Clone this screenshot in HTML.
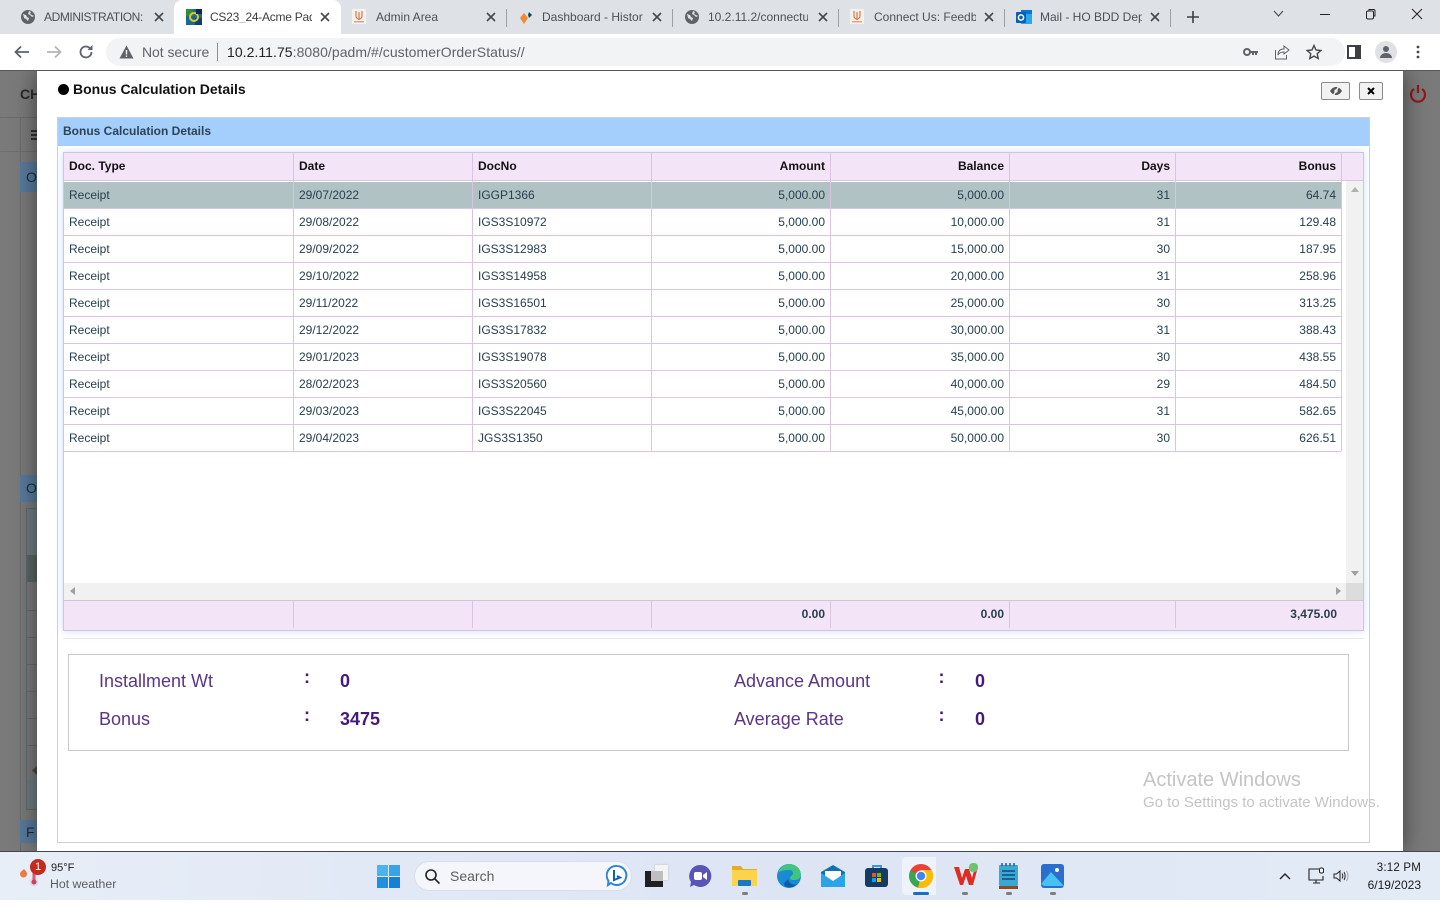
<!DOCTYPE html>
<html><head><meta charset="utf-8"><title>Bonus Calculation Details</title>
<style>
*{box-sizing:border-box}
html,body{margin:0;padding:0;width:1440px;height:908px;overflow:hidden;background:#fff;font-family:"Liberation Sans",sans-serif}
.a{position:absolute}
.t{position:absolute;white-space:nowrap;line-height:1}
.tab{position:absolute;top:11px;height:12px;font-size:12px;line-height:12px;color:#4d5054;white-space:nowrap;overflow:hidden}
.x{position:absolute;top:12px;width:10px;height:10px}
.sep{position:absolute;top:9px;width:1px;height:18px;background:#9da1a6}
.v{position:absolute;width:1px;background:#dcc4e0}
.h{position:absolute;left:64px;width:1277px;height:1px;background:#dcc4e0}
.c{position:absolute;font-size:12px;line-height:14px;color:#26404f;white-space:nowrap}
.b{font-weight:bold;color:#111}
.r{text-align:right}
.lbl{position:absolute;font-size:18px;line-height:20px;color:#5a3589;white-space:nowrap}
.val{position:absolute;font-size:18px;line-height:20px;color:#451a7c;font-weight:bold;white-space:nowrap}
.col{position:absolute;font-size:18px;line-height:18px;color:#451a7c;font-weight:bold}
</style></head><body>

<!-- tab strip -->
<div class="a" style="left:0;top:0;width:1440px;height:34px;background:#dee1e6"></div>
<div class="a" style="left:174px;top:0;width:167px;height:34px;background:#fff;border-radius:8px 8px 0 0"></div>

<svg class="a" style="left:21px;top:10px" width="14" height="14" viewBox="0 0 14 14"><circle cx="7" cy="7" r="7" fill="#5f6368"/><path d="M2 4l3 1 1 2 2 1-1 3-2-2-2-1zM8 1l2 1-1 2 2 1 2 1-2 1-2-2-2-1z" fill="#dee1e6"/></svg>
<div class="tab" style="left:44px;width:101px;letter-spacing:-.42px">ADMINISTRATION:</div>
<svg class="x" style="left:154px" viewBox="0 0 10 10"><path d="M1 1l8 8M9 1l-8 8" stroke="#45484c" stroke-width="1.6"/></svg>

<svg class="a" style="left:186px;top:9px" width="16" height="16" viewBox="0 0 16 16"><rect width="16" height="16" fill="#1c6a8a"/><rect x="0" y="0" width="7" height="7" fill="#2e8b3d"/><rect x="9" y="9" width="7" height="7" fill="#123f73"/><circle cx="8" cy="8" r="4" fill="none" stroke="#e5c33a" stroke-width="2"/><rect x="10" y="0" width="6" height="5" fill="#0e2a50"/></svg>
<div class="tab" style="left:210px;width:102px;color:#3c4043;letter-spacing:-.25px">CS23_24-Acme Pad</div>
<svg class="x" style="left:320px" viewBox="0 0 10 10"><path d="M1 1l8 8M9 1l-8 8" stroke="#45484c" stroke-width="1.6"/></svg>

<svg class="a" style="left:352px;top:9px" width="14" height="15" viewBox="0 0 14 15"><rect width="14" height="15" fill="#f5f1ee"/><path d="M4 2v5a3 3 0 0 0 6 0V2M7 3v8" stroke="#d9783f" stroke-width="1.2" fill="none"/><rect x="2" y="12" width="10" height="1.5" fill="#e8a08a"/></svg>
<div class="tab" style="left:376px;width:90px">Admin Area</div>
<svg class="x" style="left:486px" viewBox="0 0 10 10"><path d="M1 1l8 8M9 1l-8 8" stroke="#45484c" stroke-width="1.6"/></svg>
<div class="sep" style="left:506px"></div>

<svg class="a" style="left:518px;top:10px" width="16" height="15" viewBox="0 0 16 15"><path d="M6 3l4 5-4 6-4-6z" fill="#ef8a2f"/><path d="M11 2l3 3-3 3-1-3z" fill="#0d4a56"/></svg>
<div class="tab" style="left:542px;width:101px">Dashboard - Histor</div>
<svg class="x" style="left:652px" viewBox="0 0 10 10"><path d="M1 1l8 8M9 1l-8 8" stroke="#45484c" stroke-width="1.6"/></svg>
<div class="sep" style="left:672px"></div>

<svg class="a" style="left:685px;top:10px" width="14" height="14" viewBox="0 0 14 14"><circle cx="7" cy="7" r="7" fill="#5f6368"/><path d="M2 4l3 1 1 2 2 1-1 3-2-2-2-1zM8 1l2 1-1 2 2 1 2 1-2 1-2-2-2-1z" fill="#dee1e6"/></svg>
<div class="tab" style="left:708px;width:100px">10.2.11.2/connectu</div>
<svg class="x" style="left:818px" viewBox="0 0 10 10"><path d="M1 1l8 8M9 1l-8 8" stroke="#45484c" stroke-width="1.6"/></svg>
<div class="sep" style="left:838px"></div>

<svg class="a" style="left:850px;top:9px" width="14" height="15" viewBox="0 0 14 15"><rect width="14" height="15" fill="#f5f1ee"/><path d="M4 2v5a3 3 0 0 0 6 0V2M7 3v8" stroke="#d9783f" stroke-width="1.2" fill="none"/><rect x="2" y="12" width="10" height="1.5" fill="#e8a08a"/></svg>
<div class="tab" style="left:874px;width:102px">Connect Us: Feedba</div>
<svg class="x" style="left:984px" viewBox="0 0 10 10"><path d="M1 1l8 8M9 1l-8 8" stroke="#45484c" stroke-width="1.6"/></svg>
<div class="sep" style="left:1004px"></div>

<svg class="a" style="left:1016px;top:9px" width="16" height="16" viewBox="0 0 16 16"><rect x="5" y="1" width="11" height="14" fill="#28a8ea"/><rect x="5" y="1" width="11" height="4" fill="#0078d4"/><rect x="0" y="3" width="10" height="11" rx="1" fill="#0a5fb4"/><circle cx="5" cy="8.5" r="2.6" fill="none" stroke="#fff" stroke-width="1.5"/></svg>
<div class="tab" style="left:1040px;width:102px">Mail - HO BDD Dep</div>
<svg class="x" style="left:1150px" viewBox="0 0 10 10"><path d="M1 1l8 8M9 1l-8 8" stroke="#45484c" stroke-width="1.6"/></svg>
<div class="sep" style="left:1170px"></div>
<svg class="a" style="left:1187px;top:11px" width="12" height="12" viewBox="0 0 12 12"><path d="M6 0v12M0 6h12" stroke="#3c4043" stroke-width="1.6"/></svg>

<svg class="a" style="left:1273px;top:10px" width="11" height="8" viewBox="0 0 11 8"><path d="M1 1l4.500 5L10 1" stroke="#3c4043" fill="none"/></svg>
<div class="a" style="left:1320px;top:14px;width:10px;height:1px;background:#222"></div>
<svg class="a" style="left:1365px;top:8px" width="12" height="12" viewBox="0 0 12 12"><rect x="1.500" y="3" width="7" height="8" rx="1.500" fill="none" stroke="#222"/><path d="M4 3V1.500h4.500a1.500 1.500 0 0 1 1.500 1.500v5H8.500" fill="none" stroke="#222"/></svg>
<svg class="a" style="left:1411px;top:8px" width="12" height="12" viewBox="0 0 12 12"><path d="M1 1l10 10M11 1L1 11" stroke="#222"/></svg>

<!-- toolbar -->
<div class="a" style="left:0;top:34px;width:1440px;height:36px;background:#fff"></div>
<svg class="a" style="left:14px;top:45px" width="16" height="14" viewBox="0 0 16 14"><path d="M15 7H2M7 1.500L1.500 7 7 12.500" stroke="#5f6368" stroke-width="1.800" fill="none"/></svg>
<svg class="a" style="left:46px;top:45px" width="16" height="14" viewBox="0 0 16 14"><path d="M1 7h13M9 1.500L14.500 7 9 12.500" stroke="#b4b7ba" stroke-width="1.800" fill="none"/></svg>
<svg class="a" style="left:78px;top:44px" width="16" height="16" viewBox="0 0 16 16"><path d="M13.500 8a5.500 5.500 0 1 1-1.700-4" stroke="#5f6368" stroke-width="1.800" fill="none"/><path d="M14.500 1v5h-5z" fill="#5f6368"/></svg>
<div class="a" style="left:106px;top:38px;width:1239px;height:28px;background:#f1f3f4;border-radius:14px"></div>
<svg class="a" style="left:119px;top:45px" width="15" height="14" viewBox="0 0 15 14"><path d="M7.500 0.500L14.500 13.500H0.500z" fill="#5f6368"/><rect x="6.800" y="5" width="1.400" height="4.500" fill="#f1f3f4"/><rect x="6.800" y="10.500" width="1.400" height="1.500" fill="#f1f3f4"/></svg>
<div class="t" style="left:142px;top:45px;font-size:14px;color:#5f6368;letter-spacing:-.05px">Not secure</div>
<div class="a" style="left:217px;top:43px;width:1px;height:18px;background:#8a8d91"></div>
<div class="t" style="left:227px;top:45px;font-size:14px;color:#202124;letter-spacing:.05px">10.2.11.75<span style="color:#5f6368">:8080/padm/#/customerOrderStatus//</span></div>
<svg class="a" style="left:1243px;top:47px" width="15" height="10" viewBox="0 0 15 10"><circle cx="4" cy="5" r="3" fill="none" stroke="#5f6368" stroke-width="2"/><path d="M7 4h8v2h-1v2h-2V6h-1v2H9V6H7z" fill="#5f6368"/></svg>
<svg class="a" style="left:1274px;top:45px" width="16" height="15" viewBox="0 0 16 15"><path d="M1.500 5v9h11v-4" stroke="#5f6368" fill="none"/><path d="M10 1l5 4-5 4V7c-3 0-5 1-6 3 0-4 2-6 6-6z" stroke="#5f6368" fill="none"/></svg>
<svg class="a" style="left:1306px;top:44px" width="16" height="16" viewBox="0 0 16 16"><path d="M8 1.500l2 4.500 4.800.500-3.600 3.200 1 4.800L8 12.100l-4.200 2.400 1-4.800L1.200 6.500 6 6z" fill="none" stroke="#45484c" stroke-width="1.400"/></svg>
<svg class="a" style="left:1347px;top:45px" width="14" height="14" viewBox="0 0 14 14"><rect x="1" y="1" width="12" height="12" fill="none" stroke="#3c4043" stroke-width="2"/><rect x="8" y="1" width="5" height="12" fill="#3c4043"/></svg>
<div class="a" style="left:1375px;top:41px;width:22px;height:22px;border-radius:50%;background:#dfe1e5"></div>
<svg class="a" style="left:1379px;top:45px" width="14" height="14" viewBox="0 0 14 14"><circle cx="7" cy="4" r="3" fill="#5f6368"/><path d="M1 13c0-3 3-5 6-5s6 2 6 5z" fill="#5f6368"/></svg>
<svg class="a" style="left:1416px;top:45px" width="4" height="14" viewBox="0 0 4 14"><circle cx="2" cy="2" r="1.400" fill="#45484c"/><circle cx="2" cy="7" r="1.400" fill="#45484c"/><circle cx="2" cy="12" r="1.400" fill="#45484c"/></svg>

<!-- dimmed page background -->
<div class="a" style="left:0;top:71px;width:1440px;height:781px;background:#7a7a7a"></div>
<div class="t" style="left:20px;top:87px;font-size:14px;font-weight:bold;color:#2a2a2a">CH</div>
<div class="a" style="left:0;top:117px;width:37px;height:1px;background:#6b6b6b"></div>
<div class="a" style="left:0;top:151px;width:37px;height:1px;background:#6e6e6e"></div>
<div class="a" style="left:20px;top:117px;width:1px;height:735px;background:#6b6b6b"></div>
<svg class="a" style="left:31px;top:130px" width="6" height="10" viewBox="0 0 6 10"><rect width="6" height="2" fill="#333"/><rect y="4" width="6" height="2" fill="#333"/><rect y="8" width="6" height="2" fill="#333"/></svg>
<div class="a" style="left:20px;top:162px;width:17px;height:30px;background:#587a9c"></div>
<div class="t" style="left:26px;top:170px;font-size:14px;color:#1d2c3a">O</div>
<div class="a" style="left:20px;top:475px;width:17px;height:27px;background:#587a9c"></div>
<div class="t" style="left:26px;top:481px;font-size:14px;color:#1d2c3a">O</div>
<div class="a" style="left:26px;top:508px;width:11px;height:302px;border:1px solid #5f6a6e;border-right:0;background:#7a7a7a"></div>
<div class="a" style="left:27px;top:509px;width:10px;height:46px;background:#6d7c80"></div>
<div class="a" style="left:27px;top:555px;width:10px;height:27px;background:#5c6664"></div>
<div class="a" style="left:27px;top:610px;width:10px;height:1px;background:#6a6a6a"></div>
<div class="a" style="left:27px;top:637px;width:10px;height:1px;background:#6a6a6a"></div>
<div class="a" style="left:27px;top:664px;width:10px;height:1px;background:#6a6a6a"></div>
<div class="a" style="left:27px;top:691px;width:10px;height:1px;background:#6a6a6a"></div>
<div class="a" style="left:27px;top:718px;width:10px;height:1px;background:#6a6a6a"></div>
<div class="a" style="left:27px;top:745px;width:10px;height:1px;background:#6a6a6a"></div>
<svg class="a" style="left:32px;top:766px" width="5" height="9"><path d="M5 0L0 4.500 5 9z" fill="#4a4a4a"/></svg>
<div class="a" style="left:27px;top:780px;width:10px;height:29px;background:#6d7c80"></div>
<div class="a" style="left:20px;top:820px;width:17px;height:23px;background:#587a9c"></div>
<div class="t" style="left:26px;top:825px;font-size:14px;color:#1d2c3a">F</div>
<svg class="a" style="left:1409px;top:84px" width="18" height="19" viewBox="0 0 18 19"><path d="M5 5a7 7 0 1 0 8 0" fill="none" stroke="#8f1a1a" stroke-width="2.200"/><path d="M9 1v8" stroke="#8f1a1a" stroke-width="2.200"/></svg>

<!-- modal -->
<div class="a" style="left:37px;top:71px;width:1366px;height:781px;background:#fff;box-shadow:0 0 22px rgba(0,0,0,.5);clip-path:inset(0 -30px 0 -30px)"></div>
<div class="a" style="left:0;top:70px;width:1440px;height:1px;background:#55585c"></div>
<div class="a" style="left:0;top:851px;width:1440px;height:1px;background:#44474a"></div>
<div class="a" style="left:58px;top:84px;width:11px;height:11px;border-radius:50%;background:#000"></div>
<div class="t" style="left:73px;top:82px;font-size:14px;font-weight:bold;color:#111">Bonus Calculation Details</div>
<div class="a" style="left:1321px;top:82px;width:29px;height:18px;background:#f2f2f2;border:1px solid #8c8c8c;border-radius:2px"></div>
<svg class="a" style="left:1329px;top:85px" width="14" height="12" viewBox="0 0 14 12"><path d="M1 6c2-3 4-4 6-4s4 1 6 4c-2 3-4 4-6 4S3 9 1 6z" fill="#555"/><circle cx="7" cy="6" r="1.800" fill="#ddd"/><path d="M10 1L4 11" stroke="#f2f2f2" stroke-width="1.400"/></svg>
<div class="a" style="left:1359px;top:82px;width:24px;height:18px;background:#f2f2f2;border:1px solid #8c8c8c;border-radius:2px"></div>
<svg class="a" style="left:1367px;top:87px" width="8" height="8" viewBox="0 0 8 8"><path d="M1 1l6 6M7 1L1 7" stroke="#000" stroke-width="2"/></svg>

<!-- panel -->
<div class="a" style="left:57px;top:117px;width:1313px;height:726px;border:1px solid #d0d0d0"></div>
<div class="a" style="left:58px;top:118px;width:1311px;height:28px;background:#a4cefc"></div>
<div class="t" style="left:63px;top:124px;font-size:12px;line-height:14px;font-weight:bold;color:#2f4256">Bonus Calculation Details</div>

<!-- grid -->
<div class="a" style="left:63px;top:152px;width:1301px;height:479px;border:1px solid #d3c3e3;box-shadow:0 0 8px rgba(120,160,240,.35);background:#fff"></div>
<div class="a" style="left:64px;top:153px;width:1299px;height:27px;background:#f4e4f7"></div>
<div class="a" style="left:64px;top:180px;width:1299px;height:1px;background:#dcc4e0"></div>
<div class="a" style="left:64px;top:182px;width:1277px;height:26px;background:#b0c2c4"></div>
<div class="a" style="left:1346px;top:181px;width:17px;height:419px;background:#f1f1f1"></div>
<div class="a" style="left:64px;top:583px;width:1282px;height:17px;background:#f1f1f1"></div>
<div class="a" style="left:1346px;top:583px;width:17px;height:17px;background:#dcdcdc"></div>
<div class="a" style="left:64px;top:600px;width:1299px;height:30px;background:#f4e4f7;border-top:1px solid #d3c3e3"></div>
<svg class="a" style="left:1351px;top:187px" width="8" height="5"><path d="M0 5L4 0l4 5z" fill="#b0b0b0"/></svg>
<svg class="a" style="left:1351px;top:571px" width="8" height="5"><path d="M0 0l4 5 4-5z" fill="#a0a0a0"/></svg>
<svg class="a" style="left:70px;top:587px" width="5" height="8"><path d="M5 0L0 4l5 4z" fill="#a0a0a0"/></svg>
<svg class="a" style="left:1336px;top:587px" width="5" height="8"><path d="M0 0l5 4-5 4z" fill="#a0a0a0"/></svg>

<!-- vertical lines -->
<div class="v" style="left:293px;top:153px;height:298px"></div>
<div class="v" style="left:472px;top:153px;height:298px"></div>
<div class="v" style="left:651px;top:153px;height:298px"></div>
<div class="v" style="left:830px;top:153px;height:298px"></div>
<div class="v" style="left:1009px;top:153px;height:298px"></div>
<div class="v" style="left:1175px;top:153px;height:298px"></div>
<div class="v" style="left:1341px;top:153px;height:298px"></div>
<div class="v" style="left:293px;top:601px;height:27px"></div>
<div class="v" style="left:472px;top:601px;height:27px"></div>
<div class="v" style="left:651px;top:601px;height:27px"></div>
<div class="v" style="left:830px;top:601px;height:27px"></div>
<div class="v" style="left:1009px;top:601px;height:27px"></div>
<div class="v" style="left:1175px;top:601px;height:27px"></div>
<!-- horizontal lines -->
<div class="h" style="top:208px"></div><div class="h" style="top:235px"></div><div class="h" style="top:262px"></div><div class="h" style="top:289px"></div><div class="h" style="top:316px"></div><div class="h" style="top:343px"></div><div class="h" style="top:370px"></div><div class="h" style="top:397px"></div><div class="h" style="top:424px"></div><div class="h" style="top:451px"></div>

<!-- header -->
<div class="c b" style="left:69px;top:159px">Doc. Type</div>
<div class="c b" style="left:299px;top:159px">Date</div>
<div class="c b" style="left:478px;top:159px">DocNo</div>
<div class="c b r" style="left:652px;width:173px;top:159px">Amount</div>
<div class="c b r" style="left:831px;width:173px;top:159px">Balance</div>
<div class="c b r" style="left:1010px;width:160px;top:159px">Days</div>
<div class="c b r" style="left:1176px;width:160px;top:159px">Bonus</div>

<!-- rows -->
<div class="c" style="left:69px;top:188px">Receipt</div><div class="c" style="left:299px;top:188px">29/07/2022</div><div class="c" style="left:478px;top:188px">IGGP1366</div><div class="c r" style="left:652px;width:173px;top:188px">5,000.00</div><div class="c r" style="left:831px;width:173px;top:188px">5,000.00</div><div class="c r" style="left:1010px;width:160px;top:188px">31</div><div class="c r" style="left:1176px;width:160px;top:188px">64.74</div>
<div class="c" style="left:69px;top:215px">Receipt</div><div class="c" style="left:299px;top:215px">29/08/2022</div><div class="c" style="left:478px;top:215px">IGS3S10972</div><div class="c r" style="left:652px;width:173px;top:215px">5,000.00</div><div class="c r" style="left:831px;width:173px;top:215px">10,000.00</div><div class="c r" style="left:1010px;width:160px;top:215px">31</div><div class="c r" style="left:1176px;width:160px;top:215px">129.48</div>
<div class="c" style="left:69px;top:242px">Receipt</div><div class="c" style="left:299px;top:242px">29/09/2022</div><div class="c" style="left:478px;top:242px">IGS3S12983</div><div class="c r" style="left:652px;width:173px;top:242px">5,000.00</div><div class="c r" style="left:831px;width:173px;top:242px">15,000.00</div><div class="c r" style="left:1010px;width:160px;top:242px">30</div><div class="c r" style="left:1176px;width:160px;top:242px">187.95</div>
<div class="c" style="left:69px;top:269px">Receipt</div><div class="c" style="left:299px;top:269px">29/10/2022</div><div class="c" style="left:478px;top:269px">IGS3S14958</div><div class="c r" style="left:652px;width:173px;top:269px">5,000.00</div><div class="c r" style="left:831px;width:173px;top:269px">20,000.00</div><div class="c r" style="left:1010px;width:160px;top:269px">31</div><div class="c r" style="left:1176px;width:160px;top:269px">258.96</div>
<div class="c" style="left:69px;top:296px">Receipt</div><div class="c" style="left:299px;top:296px">29/11/2022</div><div class="c" style="left:478px;top:296px">IGS3S16501</div><div class="c r" style="left:652px;width:173px;top:296px">5,000.00</div><div class="c r" style="left:831px;width:173px;top:296px">25,000.00</div><div class="c r" style="left:1010px;width:160px;top:296px">30</div><div class="c r" style="left:1176px;width:160px;top:296px">313.25</div>
<div class="c" style="left:69px;top:323px">Receipt</div><div class="c" style="left:299px;top:323px">29/12/2022</div><div class="c" style="left:478px;top:323px">IGS3S17832</div><div class="c r" style="left:652px;width:173px;top:323px">5,000.00</div><div class="c r" style="left:831px;width:173px;top:323px">30,000.00</div><div class="c r" style="left:1010px;width:160px;top:323px">31</div><div class="c r" style="left:1176px;width:160px;top:323px">388.43</div>
<div class="c" style="left:69px;top:350px">Receipt</div><div class="c" style="left:299px;top:350px">29/01/2023</div><div class="c" style="left:478px;top:350px">IGS3S19078</div><div class="c r" style="left:652px;width:173px;top:350px">5,000.00</div><div class="c r" style="left:831px;width:173px;top:350px">35,000.00</div><div class="c r" style="left:1010px;width:160px;top:350px">30</div><div class="c r" style="left:1176px;width:160px;top:350px">438.55</div>
<div class="c" style="left:69px;top:377px">Receipt</div><div class="c" style="left:299px;top:377px">28/02/2023</div><div class="c" style="left:478px;top:377px">IGS3S20560</div><div class="c r" style="left:652px;width:173px;top:377px">5,000.00</div><div class="c r" style="left:831px;width:173px;top:377px">40,000.00</div><div class="c r" style="left:1010px;width:160px;top:377px">29</div><div class="c r" style="left:1176px;width:160px;top:377px">484.50</div>
<div class="c" style="left:69px;top:404px">Receipt</div><div class="c" style="left:299px;top:404px">29/03/2023</div><div class="c" style="left:478px;top:404px">IGS3S22045</div><div class="c r" style="left:652px;width:173px;top:404px">5,000.00</div><div class="c r" style="left:831px;width:173px;top:404px">45,000.00</div><div class="c r" style="left:1010px;width:160px;top:404px">31</div><div class="c r" style="left:1176px;width:160px;top:404px">582.65</div>
<div class="c" style="left:69px;top:431px">Receipt</div><div class="c" style="left:299px;top:431px">29/04/2023</div><div class="c" style="left:478px;top:431px">JGS3S1350</div><div class="c r" style="left:652px;width:173px;top:431px">5,000.00</div><div class="c r" style="left:831px;width:173px;top:431px">50,000.00</div><div class="c r" style="left:1010px;width:160px;top:431px">30</div><div class="c r" style="left:1176px;width:160px;top:431px">626.51</div>

<!-- footer -->
<div class="c r" style="left:652px;width:173px;top:607px;font-weight:bold;color:#26404f">0.00</div>
<div class="c r" style="left:831px;width:173px;top:607px;font-weight:bold;color:#26404f">0.00</div>
<div class="c r" style="left:1176px;width:161px;top:607px;font-weight:bold;color:#26404f">3,475.00</div>

<div class="a" style="left:63px;top:638px;width:1301px;height:1px;background:#e8e8e8"></div>

<!-- summary box -->
<div class="a" style="left:68px;top:654px;width:1281px;height:97px;border:1px solid #c8c8c8"></div>
<div class="lbl" style="left:99px;top:671px">Installment Wt</div>
<div class="col" style="left:304px;top:668px">:</div>
<div class="val" style="left:340px;top:671px">0</div>
<div class="lbl" style="left:99px;top:709px">Bonus</div>
<div class="col" style="left:304px;top:706px">:</div>
<div class="val" style="left:340px;top:709px">3475</div>
<div class="lbl" style="left:734px;top:671px">Advance Amount</div>
<div class="col" style="left:938.500px;top:668px">:</div>
<div class="val" style="left:975px;top:671px">0</div>
<div class="lbl" style="left:734px;top:709px">Average Rate</div>
<div class="col" style="left:938.500px;top:706px">:</div>
<div class="val" style="left:975px;top:709px">0</div>

<!-- activate windows -->
<div class="t" style="left:1143px;top:770px;font-size:20px;color:#c4c4c4">Activate Windows</div>
<div class="t" style="left:1143px;top:795px;font-size:15px;color:#c4c4c4">Go to Settings to activate Windows.</div>

<!-- taskbar -->
<div class="a" style="left:0;top:852px;width:1440px;height:48px;background:linear-gradient(90deg,#e7eef7 0%,#e1e8f6 30%,#dde5f5 55%,#e3ebf6 100%)"></div>
<div class="a" style="left:0;top:900px;width:1440px;height:8px;background:#fff"></div>

<svg class="a" style="left:20px;top:866px" width="20" height="22" viewBox="0 0 20 22"><path d="M4 3c2 2 3 3 3 5a3.500 3.500 0 0 1-7 0c0-2 2-3 4-5z" fill="#ee7a3c"/><circle cx="14" cy="16" r="4.500" fill="#d8dcef"/><rect x="12.500" y="4" width="3" height="12" fill="#e0567a"/><circle cx="14" cy="16" r="2.500" fill="#d83a5c"/></svg>
<div class="a" style="left:30px;top:859px;width:16px;height:16px;border-radius:50%;background:#c42b1c;color:#fff;font-size:11px;line-height:16px;text-align:center">1</div>
<div class="t" style="left:51px;top:863px;font-size:11px;color:#1b1b1b">95°F</div>
<div class="t" style="left:50px;top:878px;font-size:12.300px;color:#5d5d5d">Hot weather</div>

<svg class="a" style="left:377px;top:865px" width="23" height="23" viewBox="0 0 23 23"><rect width="11" height="11" fill="#4db3ee"/><rect x="12" width="11" height="11" fill="#3aa3e8"/><rect y="12" width="11" height="11" fill="#1f8fdf"/><rect x="12" y="12" width="11" height="11" fill="#1580d5"/></svg>
<div class="a" style="left:414px;top:861px;width:218px;height:30px;border-radius:15px;background:#f4f6fb;border:1px solid #d8dde8"></div>
<svg class="a" style="left:425px;top:869px" width="15" height="15" viewBox="0 0 15 15"><circle cx="6" cy="6" r="5" fill="none" stroke="#222" stroke-width="1.600"/><path d="M10 10l4.500 4.500" stroke="#222" stroke-width="1.600"/></svg>
<div class="t" style="left:450px;top:869px;font-size:14px;color:#5d5d5d">Search</div>
<svg class="a" style="left:606px;top:864px" width="22" height="24" viewBox="0 0 22 24"><path d="M11 2a9.500 9.500 0 1 1-6 17l-3 2 .5-4A9.500 9.500 0 0 1 11 2z" fill="#fff" stroke="#2f86d6" stroke-width="2"/><path d="M8 6v10l6-2.500-3-1.500" fill="none" stroke="#1260b0" stroke-width="2"/></svg>

<!-- task view -->
<div class="a" style="left:655px;top:865px;width:13px;height:15px;background:#f4f4f4;box-shadow:0 0 2px #bbb"></div>
<div class="a" style="left:645px;top:871px;width:18px;height:16px;background:#202020"></div>
<div class="a" style="left:651px;top:871px;width:12px;height:10px;background:#bfbfbf"></div>
<!-- meet -->
<svg class="a" style="left:688px;top:864px" width="24" height="24" viewBox="0 0 24 24"><path d="M12 1a11 11 0 1 1-6 20l-4 2 1-5A11 11 0 0 1 12 1z" fill="#5b54b8"/><rect x="6" y="8" width="8" height="8" rx="2" fill="#fff"/><path d="M15 11l4-3v8l-4-3z" fill="#fff"/></svg>
<!-- explorer -->
<svg class="a" style="left:732px;top:864px" width="25" height="24" viewBox="0 0 25 24"><path d="M0 2h9l2 3h14v17H0z" fill="#e5ad24"/><rect y="6" width="25" height="16" fill="#fbd34c"/><rect x="6" y="16" width="13" height="6" rx="1" fill="#1877c9"/></svg>
<div class="a" style="left:742px;top:892px;width:6px;height:3px;border-radius:2px;background:#7d7d7d"></div>
<!-- edge -->
<svg class="a" style="left:777px;top:864px" width="24" height="24" viewBox="0 0 24 24"><circle cx="12" cy="12" r="12" fill="#1a8ad4"/><path d="M1 9C3 3 8 0 12 0c6 0 12 4 12 11 0 3-3 5-7 5-3 0-4-1-4-2 0-2 3-2 3-5 0-2-2-3-4-3C7 6 3 7 1 9z" fill="#3fc481"/><path d="M11 14c0 5 5 8 9 6-3 3-7 4-10 3-2-.500-3-2-3-3 1-3 4-3 4-6z" fill="#0c5ca8"/></svg>
<!-- mail -->
<svg class="a" style="left:821px;top:864px" width="24" height="24" viewBox="0 0 24 24"><path d="M0 8L12 1l12 7v15H0z" fill="#1271b5"/><path d="M4 7h16v7l-8 4-8-4z" fill="#fff"/><path d="M0 9l12 8 12-8v14H0z" fill="#2ba5e8"/></svg>
<!-- store -->
<svg class="a" style="left:865px;top:864px" width="24" height="24" viewBox="0 0 24 24"><path d="M8 5V2h8v3" fill="none" stroke="#3a9ad9" stroke-width="2"/><rect y="4" width="23" height="19" rx="3" fill="#143a66"/><rect x="7" y="9" width="4" height="4" fill="#f25022"/><rect x="12" y="9" width="4" height="4" fill="#7fba00"/><rect x="7" y="14" width="4" height="4" fill="#00a4ef"/><rect x="12" y="14" width="4" height="4" fill="#ffb900"/></svg>
<!-- chrome -->
<div class="a" style="left:902px;top:857px;width:38px;height:38px;border-radius:4px;background:#eef2fb"></div>
<div class="a" style="left:936px;top:857px;width:4px;height:38px;background:#dfe5f3;border-radius:0 4px 4px 0"></div>
<svg class="a" style="left:909px;top:864px" width="24" height="24" viewBox="0 0 24 24"><circle cx="12" cy="12" r="12" fill="#ea4335"/><path d="M12 12L1.500 6.500A12 12 0 0 0 9 23.600z" fill="#34a853"/><path d="M12 6h10.500A12 12 0 0 1 9 23.600L12 12z" fill="#fbbc05"/><circle cx="12" cy="12" r="5.500" fill="#fff"/><circle cx="12" cy="12" r="4.200" fill="#4285f4"/></svg>
<div class="a" style="left:913px;top:892px;width:16px;height:3px;border-radius:2px;background:#1a6fc4"></div>
<!-- wps -->
<svg class="a" style="left:953px;top:862px" width="27" height="26" viewBox="0 0 27 26"><path d="M1 5h5l3 11 3-9h4l3 9 3-11h3l-5 18h-4l-3-9-3 9H7z" fill="#e02a22"/><rect x="16" y="1" width="9" height="9" rx="4" fill="#6cc36b"/></svg>
<div class="a" style="left:962px;top:892px;width:6px;height:3px;border-radius:2px;background:#7d7d7d"></div>
<!-- notepad -->
<svg class="a" style="left:999px;top:863px" width="20" height="27" viewBox="0 0 20 27"><rect x="0" y="2" width="19" height="21" rx="1" fill="#37a8d8"/><path d="M3 8h13M3 12h13M3 16h13" stroke="#0f4a74" stroke-width="1.400"/><path d="M3 0v3M7 0v3M11 0v3M15 0v3" stroke="#12527c" stroke-width="1.400"/><rect y="23" width="19" height="3" fill="#8b4a20"/></svg>
<div class="a" style="left:1006px;top:892px;width:6px;height:3px;border-radius:2px;background:#7d7d7d"></div>
<!-- photos -->
<svg class="a" style="left:1041px;top:864px" width="23" height="24" viewBox="0 0 23 24"><rect width="23" height="24" rx="3" fill="#2a6fd0"/><circle cx="16" cy="6" r="2" fill="#fff"/><path d="M0 20l10-12 13 14H3z" fill="#46c1f0"/></svg>
<div class="a" style="left:1050px;top:892px;width:6px;height:3px;border-radius:2px;background:#7d7d7d"></div>

<!-- tray -->
<svg class="a" style="left:1279px;top:872px" width="12" height="8" viewBox="0 0 12 8"><path d="M1 7l5-5 5 5" fill="none" stroke="#222" stroke-width="1.400"/></svg>
<svg class="a" style="left:1308px;top:867px" width="18" height="18" viewBox="0 0 18 18"><path d="M11 2H1v11h14v-4" fill="none" stroke="#222" stroke-width="1.100"/><path d="M5 16h7M8 13v3" stroke="#222" stroke-width="1.100"/><rect x="11.500" y="1" width="4" height="5" rx="1.500" fill="#f2f5fb" stroke="#222"/></svg>
<svg class="a" style="left:1333px;top:869px" width="16" height="14" viewBox="0 0 16 14"><path d="M1 5h2.500L7 2v10L3.500 9H1z" fill="none" stroke="#222"/><path d="M9 4.500c1 1.500 1 3.500 0 5M11 3c1.500 2 1.500 6 0 8" fill="none" stroke="#222"/><path d="M13.500 2c2 3 2 7 0 10" fill="none" stroke="#aaa"/></svg>
<div class="t" style="right:19px;top:863px;font-size:11.500px;color:#1b1b1b;letter-spacing:.2px">3:12 PM</div>
<div class="t" style="right:19px;top:879px;font-size:12px;color:#1b1b1b">6/19/2023</div>

</body></html>
